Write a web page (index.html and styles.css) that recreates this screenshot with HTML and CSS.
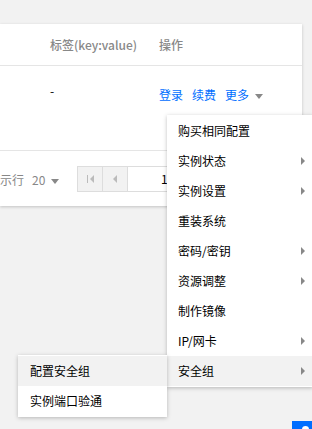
FILE: index.html
```html
<!DOCTYPE html>
<html lang="zh-CN">
<head>
    <meta charset="UTF-8">
    <meta name="viewport" content="width=device-width, initial-scale=1.0">
    <title>实例列表</title>
    <link rel="stylesheet" href="styles.css">
</head>
<body>

    <!-- 实例表格 -->
    <div class="card">
        <div class="table-head">
            <div class="col-tag">标签(key:value)</div>
            <div class="col-op">操作</div>
        </div>
        <div class="table-row">
            <div class="col-tag dash">-</div>
            <div class="col-op links">
                <a href="#">登录</a>
                <a href="#">续费</a>
                <a href="#" class="more">更多<i class="caret"></i></a>
            </div>
        </div>
        <div class="pager-bar">
            <span class="page-size">示行<span class="num">20</span><i class="caret"></i></span>
            <div class="pager">
                <span class="pg-btn"><i class="ico-first"></i></span>
                <span class="pg-btn"><i class="ico-prev"></i></span>
                <span class="pg-input">1</span>
            </div>
        </div>
    </div>

    <!-- 更多 下拉菜单 -->
    <ul class="menu">
        <li>购买相同配置</li>
        <li class="sub">实例状态</li>
        <li class="sub">实例设置</li>
        <li>重装系统</li>
        <li class="sub">密码/密钥</li>
        <li class="sub">资源调整</li>
        <li>制作镜像</li>
        <li class="sub">IP/网卡</li>
        <li class="sub active">安全组</li>
    </ul>

    <!-- 安全组 子菜单 -->
    <ul class="menu submenu">
        <li class="active">配置安全组</li>
        <li>实例端口验通</li>
    </ul>

    <div class="float-btn"><span></span></div>

</body>
</html>
```

FILE: styles.css
```css
* {
    margin: 0;
    padding: 0;
    box-sizing: border-box;
}

html {
    height: 429px;
    overflow: hidden;
}

body {
    position: relative;
    height: 429px;
    overflow: hidden;
    background: #f2f2f2;
    font-family: "Noto Sans CJK SC", "Noto Sans", sans-serif;
    font-size: 12px;
    color: #000;
}

.card {
    width: 302px;
    margin-top: 24px;
    background: #fff;
    box-shadow: 0 1px 3px rgba(0, 0, 0, 0.2);
}

.table-head,
.table-row {
    display: flex;
    border-bottom: 1px solid #e5e5e5;
    white-space: nowrap;
}

.table-head {
    height: 42px;
    align-items: center;
    color: #888;
    font-weight: 500;
}

.table-row {
    height: 85px;
    padding-top: 19px;
    align-items: flex-start;
    line-height: 20px;
}

.col-tag {
    width: 159px;
    padding-left: 50px;
    flex-shrink: 0;
}

.dash {
    margin-top: -4px;
}

.col-op {
    flex: 1;
}

.links {
    display: flex;
    gap: 9px;
}

.links a {
    color: #006eff;
    text-decoration: none;
}

.caret {
    display: inline-block;
    width: 0;
    height: 0;
    border-left: 4px solid transparent;
    border-right: 4px solid transparent;
    border-top: 5px solid #888;
    vertical-align: middle;
    margin-left: 6px;
}

.pager-bar {
    height: 55px;
    display: flex;
    align-items: center;
    padding-top: 1px;
}

.page-size {
    color: #888;
    width: 77px;
}

.page-size .num {
    margin-left: 8px;
}

.pager {
    display: flex;
    height: 26px;
    border: 1px solid #ddd;
}

.pg-btn {
    width: 25px;
    background: #f2f2f2;
    border-right: 1px solid #ddd;
    display: flex;
    align-items: center;
    justify-content: center;
}

.ico-first,
.ico-prev {
    display: inline-block;
    width: 0;
    height: 0;
    border-top: 4px solid transparent;
    border-bottom: 4px solid transparent;
    border-right: 4px solid #bbb;
}

.ico-first {
    position: relative;
    margin-left: 3px;
}

.ico-first::before {
    content: "";
    position: absolute;
    left: -3px;
    top: -4px;
    width: 1px;
    height: 8px;
    background: #bbb;
}

.pg-input {
    width: 80px;
    padding-left: 33px;
    line-height: 24px;
    background: #fff;
}

.menu {
    list-style: none;
    position: absolute;
    left: 167px;
    top: 115px;
    width: 146px;
    padding: 1px 0;
    background: #fff;
    box-shadow: 0 1px 4px rgba(0, 0, 0, 0.25);
}

.menu li {
    position: relative;
    height: 30px;
    line-height: 30px;
    padding-left: 11px;
    white-space: nowrap;
}

.menu li.active {
    background: #f2f2f2;
}

.menu li.sub::after {
    content: "";
    position: absolute;
    right: 8px;
    top: 11px;
    border-top: 4px solid transparent;
    border-bottom: 4px solid transparent;
    border-left: 4px solid #888;
}

.submenu {
    left: 18px;
    top: 355px;
    width: 149px;
}

.submenu li {
    padding-left: 12px;
}

.float-btn {
    position: absolute;
    left: 292px;
    top: 421px;
    width: 20px;
    height: 8px;
    overflow: hidden;
    background: #006eff;
}

.float-btn span {
    position: absolute;
    left: 10px;
    top: 5px;
    width: 7px;
    height: 7px;
    border-radius: 50%;
    background: #fff;
}
```
